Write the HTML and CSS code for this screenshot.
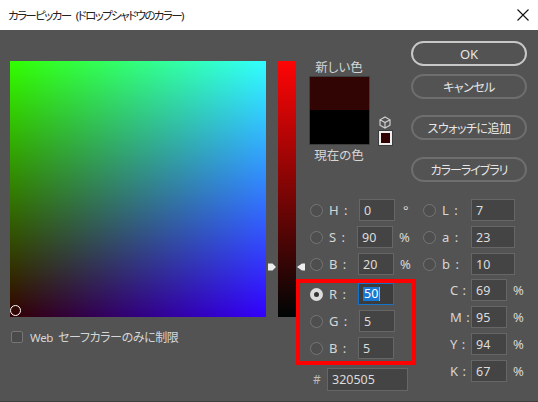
FILE: index.html
```html
<!DOCTYPE html>
<html lang="ja">
<head>
<meta charset="utf-8">
<title>カラーピッカー</title>
<link rel="stylesheet" href="styles.css">
</head>
<body>
<div class="window">
  <header class="titlebar">
    <span class="title">カラーピッカー (ドロップシャドウのカラー)</span>
    <svg class="close" viewBox="0 0 12 12" width="12" height="12"><path d="M.5.5l11 11M11.5.5l-11 11" stroke="#111" stroke-width="1.1" fill="none"/></svg>
  </header>
  <main class="dialog">
    <section class="picker">
      <div class="field-square"><span class="marker"></span></div>
      <label class="websafe"><span class="checkbox"></span><span class="web">Web</span> <span>セーフカラーのみに制限</span></label>
    </section>
    <div class="strip">
      <svg class="arrow arrow-left" viewBox="0 0 8 8" width="8" height="8"><path d="M0 .5h4.500L8 4 4.500 7.500H0z" fill="#eee"/></svg>
      <svg class="arrow arrow-right" viewBox="0 0 8 8" width="8" height="8"><path d="M8 .5H5L0 4l5 3.500h3z" fill="#eee"/></svg>
    </div>
    <section class="panel">
      <div class="upper">
        <div class="preview">
          <div class="preview-label">新しい色</div>
          <div class="preview-row">
            <div class="swatches">
              <div class="swatch-new"></div>
              <div class="swatch-current"></div>
            </div>
            <div class="gamut">
              <svg class="cube" viewBox="0 0 12 13" width="12" height="13"><path d="M6 1l5 2.800v5.400L6 12 1 9.200V3.800zM1 3.800L6 6.500l5-2.700M6 6.500V12" fill="none" stroke="#cfcfcf" stroke-width="1.200"/></svg>
              <span class="web-swatch"></span>
            </div>
          </div>
          <div class="preview-label current">現在の色</div>
        </div>
        <div class="buttons">
          <button class="btn btn-primary">OK</button>
          <button class="btn">キャンセル</button>
          <button class="btn btn-swatch">スウォッチに追加</button>
          <button class="btn btn-library">カラーライブラリ</button>
        </div>
      </div>
      <div class="lower">
        <div class="col-left">
          <div class="rows rows-hsb">
            <div class="row"><span class="radio"></span><span class="lab">H :</span><span class="input nudge-r">0</span><span class="unit deg">°</span></div>
            <div class="row"><span class="radio"></span><span class="lab">S :</span><span class="input nudge-l">90</span><span class="unit">%</span></div>
            <div class="row"><span class="radio"></span><span class="lab">B :</span><span class="input">20</span><span class="unit">%</span></div>
          </div>
          <div class="redbox rows">
            <div class="row"><span class="radio on"></span><span class="lab">R :</span><span class="input active"><span class="sel">50</span><span class="caret"></span></span></div>
            <div class="row"><span class="radio"></span><span class="lab">G :</span><span class="input nudge-r">5</span></div>
            <div class="row"><span class="radio"></span><span class="lab">B :</span><span class="input">5</span></div>
          </div>
          <div class="hexrow"><span class="hash">#</span><span class="input hex">320505</span></div>
        </div>
        <div class="col-right">
          <div class="rows rows-lab">
            <div class="row"><span class="radio"></span><span class="lab">L :</span><span class="input wide">7</span></div>
            <div class="row"><span class="radio"></span><span class="lab">a :</span><span class="input wide">23</span></div>
            <div class="row"><span class="radio"></span><span class="lab">b :</span><span class="input wide">10</span></div>
          </div>
          <div class="rows rows-cmyk">
            <div class="row"><span class="lab lab-c">C :</span><span class="input">69</span><span class="unit">%</span></div>
            <div class="row"><span class="lab lab-c">M :</span><span class="input">95</span><span class="unit">%</span></div>
            <div class="row"><span class="lab lab-c">Y :</span><span class="input">94</span><span class="unit">%</span></div>
            <div class="row"><span class="lab lab-c">K :</span><span class="input">67</span><span class="unit">%</span></div>
          </div>
        </div>
      </div>
    </section>
  </main>
</div>
</body>
</html>
```
FILE: styles.css
```css
* { box-sizing: border-box; }
html, body { margin: 0; padding: 0; }
body {
  width: 538px;
  height: 402px;
  overflow: hidden;
  font-family: "Noto Sans", "Noto Sans CJK JP", sans-serif;
  font-size: 12px;
  color: #d6d6d6;
  background: #535353;
  font-feature-settings: "palt";
}
.window {
  display: flex;
  flex-direction: column;
  width: 538px;
  height: 402px;
  border-bottom: 1px solid #3f3f3f;
}
.titlebar {
  flex: none;
  display: flex;
  align-items: center;
  justify-content: space-between;
  height: 30px;
  padding: 0 9px 0 8px;
  background: #fff;
  color: #222;
}
.title { font-size: 11.5px; letter-spacing: -1.6px; word-spacing: 4px; }
.dialog {
  flex: 1;
  display: flex;
  padding-left: 10px;
}
.picker { width: 256px; margin-top: 31px; }
.field-square {
  position: relative;
  width: 256px;
  height: 256px;
  background-color: #320000;
  background-image:
    linear-gradient(to top, #000, #0f0),
    linear-gradient(to right, #000, #00f);
  background-blend-mode: screen;
}
.marker {
  position: absolute;
  left: 0;
  bottom: 1px;
  width: 11px;
  height: 11px;
  border: 1px solid #fff;
  border-radius: 50%;
}
.websafe {
  display: flex;
  align-items: center;
  margin-top: 11px;
  font-size: 12px;
  letter-spacing: -0.4px;
}
.checkbox {
  width: 12px;
  height: 12px;
  margin: 0 7px 0 1px;
  border: 1px solid #757575;
  border-radius: 2px;
  background: #4a4a4a;
}
.web { margin-right: 5px; font-size: 11.5px; letter-spacing: -0.3px; }
.strip {
  position: relative;
  width: 20px;
  height: 256px;
  margin: 31px 0 0 12px;
  background: linear-gradient(#ff0505, #000505);
}
.arrow { position: absolute; top: 202px; }
.arrow-left { left: -10px; }
.arrow-right { right: -9px; }
.panel { width: 242px; }
.upper { display: flex; height: 158px; padding-top: 11px; }
.preview { width: 115px; padding-left: 13px; padding-top: 18px; }
.preview-label { width: 60px; text-align: center; line-height: 17px; font-size: 12.500px; }
.preview-label.current { margin-top: 2px; }
.preview-row { display: flex; }
.swatches {
  width: 61px;
  height: 69px;
  border: 1px solid #3d3d3d;
}
.swatch-new { height: 33px; background: #320505; }
.swatch-current { height: 34px; background: #000; }
.gamut {
  display: flex;
  flex-direction: column;
  align-items: flex-start;
  justify-content: flex-end;
  gap: 2px;
  margin-left: 9px;
}
.cube { display: block; }
.web-swatch {
  width: 13px;
  height: 14px;
  border: 2px solid #eee;
  outline: 1px solid #3d3d3d;
  background: #320000;
}
.buttons { width: 116px; }
.btn {
  display: block;
  width: 116px;
  height: 25px;
  margin-bottom: 8px;
  padding: 0;
  border: 2px solid #6e6e6e;
  border-radius: 13px;
  background: transparent;
  color: #e6e6e6;
  font: inherit;
  font-size: 12px;
  letter-spacing: -0.5px;
}
.btn-primary { border-color: #c8c8c8; font-size: 13px; letter-spacing: 0; }
.btn-swatch { margin-top: 16px; margin-bottom: 17px; }
.btn-library { letter-spacing: -1px; }
.lower { display: flex; padding-top: 11px; }
.col-left { width: 120px; }
.col-right { width: 115px; margin-left: 7px; }
.rows { display: flex; flex-direction: column; gap: 5px; }
.rows-hsb { padding-left: 14px; }
.row { display: flex; align-items: center; height: 22px; }
.radio {
  flex: none;
  width: 13px;
  height: 13px;
  border: 1.500px solid #757575;
  border-radius: 50%;
  background: #4e4e4e;
}
.radio.on {
  border: 4px solid #dcdcdc;
  background: #333;
}
.lab { width: 35px; padding-left: 6px; font-size: 13px; word-spacing: 2px; }
.lab-c { width: 21px; padding-left: 0; margin-left: 27px; word-spacing: 1px; }
.input {
  display: flex;
  align-items: center;
  flex: none;
  width: 36px;
  height: 22px;
  padding-left: 4px;
  background: #444;
  border: 1px solid #666;
  color: #dcdcdc;
  font-size: 12.500px;
}
.input.wide { width: 44px; }
.input.hex { width: 81px; height: 23px; }
.nudge-r { margin-left: 1px; }
.nudge-l { margin-left: -1px; }
.input.active { border-color: #1473c9; background: #3c3c3c; }
.sel { background: #1a78d2; color: #fff; padding: 0 1px; line-height: 14px; }
.caret { width: 1px; height: 14px; background: #e8a050; }
.unit { margin-left: 6px; font-size: 13px; }
.unit.deg { margin-left: 8px; }
.redbox {
  width: 120px;
  height: 86px;
  margin-top: 4px;
  padding: 0 0 0 10px;
  border: 4px solid #fe0000;
}
.hexrow { display: flex; align-items: center; margin-top: 3px; padding-left: 17px; }
.hash { width: 14px; color: #bbb; }
.rows-cmyk { margin-top: 4px; }
```
